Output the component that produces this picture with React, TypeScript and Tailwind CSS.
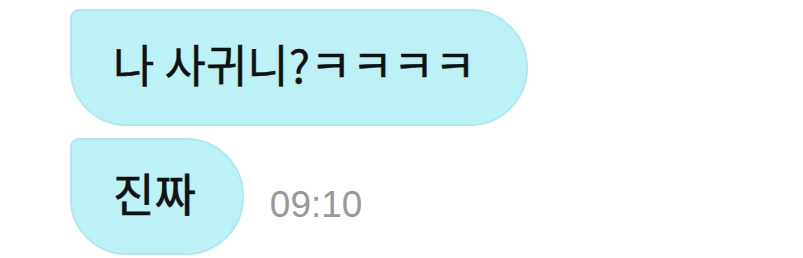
export default function App() {
  return (
    <div className="w-[803px] h-[258px] bg-white overflow-hidden pl-[70px] pt-[9px] flex flex-col gap-[12px]">
      {/* first bubble */}
      <div className="flex items-end">
        <div className="h-[117px] flex items-center pl-[41px] pr-[50px] bg-[#bcf2f6] border-2 border-[#aee9f0] rounded-tl-[9px] rounded-tr-[58px] rounded-br-[58px] rounded-bl-[56px]">
          <span className="text-[45px] leading-none font-normal text-[#111] pb-[8px] [-webkit-text-stroke:0.4px_#111] [font-family:'Noto_Sans_CJK_KR',sans-serif]">
            나 사귀니?ㅋㅋㅋㅋ
          </span>
        </div>
      </div>

      {/* second bubble + time */}
      <div className="flex items-end">
        <div className="h-[117px] flex items-center pl-[41px] pr-[46px] bg-[#bcf2f6] border-2 border-[#aee9f0] rounded-tl-[9px] rounded-tr-[58px] rounded-br-[58px] rounded-bl-[56px]">
          <span className="text-[45px] leading-none font-normal text-[#111] pb-[8px] [-webkit-text-stroke:0.7px_#111] [font-family:'Noto_Sans_CJK_KR',sans-serif]">
            진짜
          </span>
        </div>
        <span className="ml-[26px] mb-[32px] text-[37px] leading-none text-[#999] [font-family:'Liberation_Sans',Arial,sans-serif]">
          09:10
        </span>
      </div>
    </div>
  );
}
